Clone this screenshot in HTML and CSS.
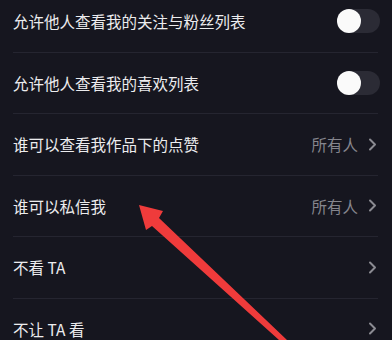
FILE: index.html
```html
<!DOCTYPE html>
<html>
<head>
	<title>隐私设置</title>
	<link rel="stylesheet" href="styles.css">
</head>
<body>
	<div class="list">
		<div class="row">
			<span class="label">允许他人查看我的关注与粉丝列表</span>
			<span class="toggle"><span class="knob"></span></span>
		</div>
		<div class="row">
			<span class="label">允许他人查看我的喜欢列表</span>
			<span class="toggle"><span class="knob"></span></span>
		</div>
		<div class="row">
			<span class="label">谁可以查看我作品下的点赞</span>
			<span class="value">所有人</span>
			<svg class="chev" width="9" height="13" viewBox="0 0 9 13"><path d="M2 1.5 L7 6.5 L2 11.5" fill="none" stroke="#8b8b92" stroke-width="2" stroke-linecap="round" stroke-linejoin="round"/></svg>
		</div>
		<div class="row">
			<span class="label">谁可以私信我</span>
			<span class="value">所有人</span>
			<svg class="chev" width="9" height="13" viewBox="0 0 9 13"><path d="M2 1.5 L7 6.5 L2 11.5" fill="none" stroke="#8b8b92" stroke-width="2" stroke-linecap="round" stroke-linejoin="round"/></svg>
		</div>
		<div class="row">
			<span class="label">不看 TA</span>
			<svg class="chev" width="9" height="13" viewBox="0 0 9 13"><path d="M2 1.5 L7 6.5 L2 11.5" fill="none" stroke="#8b8b92" stroke-width="2" stroke-linecap="round" stroke-linejoin="round"/></svg>
		</div>
		<div class="row">
			<span class="label">不让 TA 看</span>
			<svg class="chev" width="9" height="13" viewBox="0 0 9 13"><path d="M2 1.5 L7 6.5 L2 11.5" fill="none" stroke="#8b8b92" stroke-width="2" stroke-linecap="round" stroke-linejoin="round"/></svg>
		</div>
	</div>

	<svg class="arrow" width="392" height="340" viewBox="0 0 392 340">
		<polygon points="139,205 163,211 159,218 287,340 279,340 152,226 146,230" fill="#ef3b3b"/>
	</svg>
</body>
</html>
```

FILE: styles.css
```css
html, body{
	margin: 0;
	background: #16161f;
	overflow: hidden;
}
body{
	position: relative;
	width: 392px;
	height: 340px;
	font-family: "Noto Sans CJK SC", "Noto Sans", sans-serif;
}
.list{
	margin-top: -9px;
}
.row{
	box-sizing: border-box;
	height: 61.5px;
	margin: 0 14px 0 13px;
	border-bottom: 1px solid #252530;
	display: flex;
	align-items: center;
}
.label{
	flex: 1;
	font-size: 15.5px;
	color: #ececee;
}
.value{
	font-size: 15.5px;
	color: #85858d;
	margin-right: 10px;
}
.chev{
	margin-right: 1px;
}
.toggle{
	width: 43px;
	height: 24px;
	border-radius: 12px;
	background: #2b2b35;
	margin-right: -2px;
	display: flex;
	align-items: center;
}
.knob{
	width: 24px;
	height: 24px;
	border-radius: 50%;
	background: #fafafa;
}
.arrow{
	position: absolute;
	left: 0;
	top: 0;
}
```
